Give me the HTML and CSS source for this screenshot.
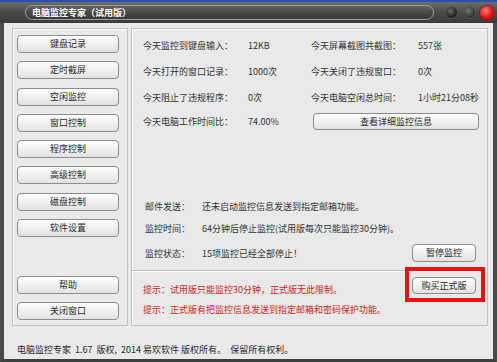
FILE: index.html
```html
<!DOCTYPE html>
<html lang="zh-CN">
<head>
<meta charset="utf-8">
<title>电脑监控专家（试用版）</title>
<link rel="stylesheet" href="styles.css">
</head>
<body>
<div class="desk"></div>
<div class="titlebar">
  <div class="title">电脑监控专家（试用版）</div>
  <span class="dot d1"></span>
  <span class="dot d2"></span>
  <span class="dot red"></span>
</div>
<div class="win">
  <div class="main">
    <div class="nav">
      <div class="btn navbtn">键盘记录</div>
      <div class="btn navbtn">定时截屏</div>
      <div class="btn navbtn">空闲监控</div>
      <div class="btn navbtn">窗口控制</div>
      <div class="btn navbtn">程序控制</div>
      <div class="btn navbtn">高级控制</div>
      <div class="btn navbtn">磁盘控制</div>
      <div class="btn navbtn">软件设置</div>
      <div class="spacer"></div>
      <div class="btn navbtn">帮助</div>
      <div class="btn navbtn">关闭窗口</div>
    </div>
    <div class="panel">
      <div class="stats">
        <div>今天监控到键盘输入：</div><div>12KB</div>
        <div>今天屏幕截图共截图：</div><div>557张</div>
        <div>今天打开的窗口记录：</div><div>1000次</div>
        <div>今天关闭了违规窗口：</div><div>0次</div>
        <div>今天阻止了违规程序：</div><div>0次</div>
        <div>今天电脑空闲总时间：</div><div>1小时21分08秒</div>
        <div>今天电脑工作时间比：</div><div>74.00%</div>
        <div class="btn wide">查看详细监控信息</div>
      </div>
      <div class="info">
        <div class="irow"><span class="ilabel">邮件发送：</span><span>还未启动监控信息发送到指定邮箱功能。</span></div>
        <div class="irow"><span class="ilabel">监控时间：</span><span>64分钟后停止监控(试用版每次只能监控30分钟)。</span></div>
        <div class="irow last"><span class="ilabel">监控状态：</span><span>15项监控已经全部停止！</span><span class="btn small">暂停监控</span></div>
      </div>
      <div class="tips">
        <div class="tiptext">
          <div>提示：试用版只能监控30分钟，正式版无此限制。</div>
          <div>提示：正式版有把监控信息发送到指定邮箱和密码保护功能。</div>
        </div>
        <div class="btn small buy">购买正式版<span class="mark"></span></div>
      </div>
    </div>
  </div>
  <div class="footer">电脑监控专家&nbsp; 1.67&nbsp; 版权,&nbsp; 2014 易欢软件 版权所有。&nbsp; 保留所有权利。</div>
</div>
</body>
</html>
```
FILE: styles.css
```css
* { box-sizing: border-box; }
html, body {
  margin: 0;
  padding: 0;
  width: 497px;
  height: 362px;
  overflow: hidden;
  background: #e9e9e9;
  font-family: "Noto Sans CJK SC", "Noto Sans", sans-serif;
  font-size: 9px;
  color: #333;
}
.desk {
  height: 2px;
  background: #2d4fb5;
}
.titlebar {
  height: 21px;
  display: flex;
  align-items: center;
  padding-left: 25px;
  background: linear-gradient(#6c6c6c, #4a4a4a 50%, #3a3a3a);
}
.title {
  width: 409px;
  height: 15px;
  border: 1px solid #9c9c9c;
  border-radius: 8px;
  background: linear-gradient(#626262, #444 60%, #3a3a3a);
  color: #fff;
  font-weight: bold;
  font-size: 9px;
  line-height: 13px;
  padding-left: 6px;
}
.dot {
  display: block;
  width: 11px;
  height: 11px;
  border-radius: 50%;
  background: radial-gradient(circle at 40% 35%, #6a6a6a, #262626 60%, #111);
  box-shadow: 0 0 0 1px #555;
}
.d1 { margin-left: 12px; }
.d2 { margin-left: 7px; background: radial-gradient(circle at 40% 35%, #777, #3a3a3a 60%, #222); }
.red {
  width: 14px;
  height: 14px;
  margin-left: 5px;
  background: radial-gradient(circle at 40% 35%, #ff8080, #e01010 55%, #a00000);
  box-shadow: 0 0 0 1px #7a2a2a;
}
.win {
  height: 339px;
  border-left: 4px solid #4a4a4a;
  border-right: 4px solid #4a4a4a;
  border-bottom: 3px solid #3e3e3e;
  background: #e9e9e9;
  display: flex;
  flex-direction: column;
}
.main {
  display: flex;
  gap: 3px;
  padding: 5px 0 0 8px;
  height: 303px;
}
.nav {
  width: 116px;
  height: 298px;
  border: 1px solid #c2c2c2;
  box-shadow: inset 1px 1px 0 #fbfbfb;
  display: flex;
  flex-direction: column;
  gap: 8.3px;
  padding: 6px 4px 5px;
}
.spacer { flex: 1; }
.btn {
  border: 1px solid #8c8c8c;
  border-radius: 4px;
  background: linear-gradient(#fdfdfd, #f0f0f0 50%, #e2e2e2);
  text-align: center;
  color: #2a2a2a;
  white-space: nowrap;
}
.navbtn {
  width: 102px;
  height: 18px;
  line-height: 16px;
  flex: none;
}
.panel {
  width: 357px;
  height: 298px;
  border: 1px solid #c2c2c2;
  box-shadow: inset 1px 1px 0 #fbfbfb;
  display: flex;
  flex-direction: column;
}
.stats {
  display: grid;
  grid-template-columns: 105px 63px 107px 1fr;
  grid-template-rows: 26px 26px 26px 22px;
  align-items: center;
  padding: 3px 11px 0 11px;
  white-space: nowrap;
}
.wide {
  grid-column: 3 / 5;
  margin-left: 2px;
  height: 17px;
  line-height: 15px;
}
.info {
  margin-top: 63px;
  padding: 0 11px 0 13px;
  border-bottom: 1px solid #bdbdbd;
  box-shadow: 0 1px 0 #fff;
  padding-bottom: 6px;
  white-space: nowrap;
}
.irow {
  height: 22px;
  display: flex;
  align-items: center;
}
.irow.last { margin-top: 3px; }
.ilabel { width: 57px; flex: none; }
.small {
  width: 64px;
  height: 18px;
  line-height: 16px;
  margin-left: auto;
}
.tips {
  display: flex;
  padding: 0 11px;
  margin-top: 1px;
}
.tiptext {
  flex: 1;
  padding-top: 8px;
  line-height: 20px;
  color: #d01c1c;
  white-space: nowrap;
}
.buy {
  position: relative;
  margin-top: 5px;
  height: 17px;
  line-height: 15px;
}
.mark {
  position: absolute;
  top: -11px;
  left: -8px;
  right: -10px;
  bottom: -9px;
  border: 4px solid #ee1010;
}
.footer {
  padding: 18px 0 0 13px;
  line-height: 12px;
  color: #2a2a2a;
  white-space: nowrap;
}
```
